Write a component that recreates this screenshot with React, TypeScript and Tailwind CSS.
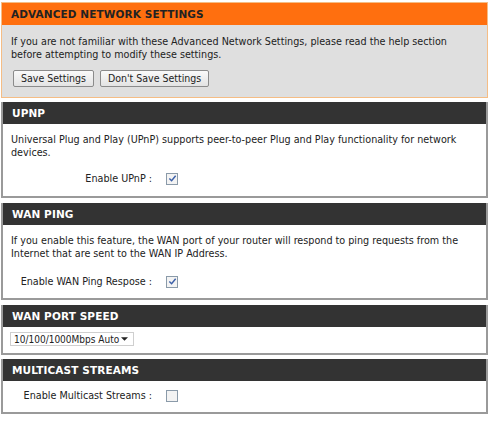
const font = "font-['Tahoma','DejaVu_Sans_Condensed','Liberation_Sans',sans-serif]";

function Header({ title, orange }: { title: string; orange?: boolean }) {
  return (
    <div
      className={`flex h-[22px] items-center px-[9px] text-[10.5px] font-bold tracking-[0.01em] font-['Verdana','DejaVu_Sans',sans-serif] ${
        orange ? "bg-[#ff6f0f] text-[#222]" : "bg-[#333333] text-white"
      }`}
    >
      {title}
    </div>
  );
}

function Check({ checked }: { checked?: boolean }) {
  return (
    <span className="flex h-[12px] w-[12px] items-center justify-center border border-[#8a9aa9] bg-[#f3f3f3]">
      {checked && (
        <svg viewBox="0 0 10 10" className="h-[9px] w-[9px]">
          <path d="M1.5 5 L4 7.5 L8.5 2" fill="none" stroke="#3b5fa8" strokeWidth="1.6" />
        </svg>
      )}
    </span>
  );
}

function Button({ label }: { label: string }) {
  return (
    <div className="flex h-[17px] items-center rounded-[2px] border border-[#8b8b8b] bg-gradient-to-b from-[#fafafa] to-[#e3e3e3] px-[7px] text-[10.5px] text-[#222]">
      {label}
    </div>
  );
}

function Box({ title, children, gap = "mt-[4px]" }: { title: string; children: React.ReactNode; gap?: string }) {
  return (
    <section className={`border-2 border-t-0 border-[#9a9a9a] bg-white ${gap}`}>
      <Header title={title} />
      {children}
    </section>
  );
}

export default function App() {
  return (
    <div className={`h-[421px] w-[490px] bg-white pt-[2px] text-[10.7px] leading-[13px] text-[#222] ${font}`}>
      <div className="ml-[1px] w-[487px]">
        <section className="border border-[#f5bd85] bg-[#dfdfdf]">
          <Header title="ADVANCED NETWORK SETTINGS" orange />
          <p className="px-[9px] pt-[10px]">
            If you are not familiar with these Advanced Network Settings, please read the help section
            <br />
            before attempting to modify these settings.
          </p>
          <div className="flex gap-[6px] px-[11px] pb-[10px] pt-[9px]">
            <Button label="Save Settings" />
            <Button label="Don't Save Settings" />
          </div>
        </section>

        <Box title="UPNP">
          <p className="px-[8px] pt-[9px]">
            Universal Plug and Play (UPnP) supports peer-to-peer Plug and Play functionality for network
            <br />
            devices.
          </p>
          <div className="flex items-center pb-[11px] pt-[13px]">
            <span className="w-[153px] pr-[4px] text-right">Enable UPnP :</span>
            <span className="ml-[10px]">
              <Check checked />
            </span>
          </div>
        </Box>

        <Box title="WAN PING" gap="mt-[5px]">
          <p className="px-[8px] pt-[9px]">
            If you enable this feature, the WAN port of your router will respond to ping requests from the
            <br />
            Internet that are sent to the WAN IP Address.
          </p>
          <div className="flex items-center pb-[10px] pt-[15px]">
            <span className="w-[153px] pr-[4px] text-right">Enable WAN Ping Respose :</span>
            <span className="ml-[10px]">
              <Check checked />
            </span>
          </div>
        </Box>

        <Box title="WAN PORT SPEED" gap="mt-[5px]">
          <div className="px-[7px] pb-[7px] pt-[5px]">
            <div className="flex h-[14px] w-[124px] items-center whitespace-nowrap border border-[#cfcfcf] bg-white pl-[3px] pr-[5px] text-[10px]">
              <span>10/100/1000Mbps Auto</span>
              <svg viewBox="0 0 8 4" className="ml-auto h-[4px] w-[7px] shrink-0">
                <path d="M0 0 H8 L4 4 Z" fill="#222" />
              </svg>
            </div>
          </div>
        </Box>

        <Box title="MULTICAST STREAMS">
          <div className="flex items-center pb-[10px] pt-[8px]">
            <span className="w-[153px] pr-[4px] text-right">Enable Multicast Streams :</span>
            <span className="ml-[10px]">
              <Check />
            </span>
          </div>
        </Box>
      </div>
    </div>
  );
}
